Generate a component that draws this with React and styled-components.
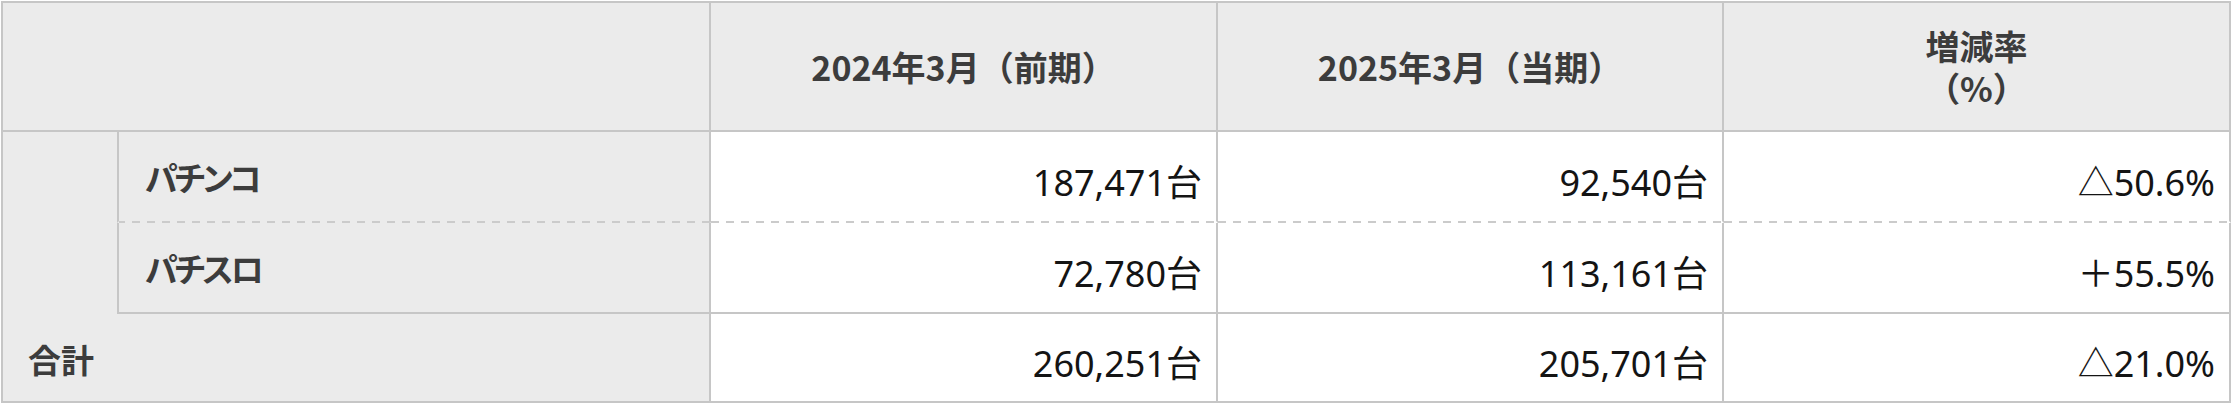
import React from 'react'
import styled, { createGlobalStyle } from 'styled-components'

const line = '#c6c6c6'

const GlobalStyle = createGlobalStyle`
  body {
    margin: 0;
    background: #fff;
  }
`

const Table = styled.div`
  display: grid;
  grid-template-columns: 114px 594px 507px 506px 507px;
  grid-template-rows: 129px 91px 91px 89px;
  width: max-content;
  margin: 1px;
  border-top: 2px solid ${line};
  border-left: 2px solid ${line};
  font-family: "Noto Sans CJK JP", sans-serif;
`

const Cell = styled.div`
  box-sizing: border-box;
  display: flex;
  align-items: center;
  border-right: 2px solid ${line};
  border-bottom: 2px solid ${props => (props.$dashed ? 'transparent' : line)};
  background-color: ${props => (props.$shade ? '#ebebeb' : '#fff')};
  ${props =>
    props.$dashed &&
    `
    background-image: repeating-linear-gradient(to right, #cbcbcb 0 8px, transparent 8px 15px);
    background-size: 100% 2px;
    background-position: left bottom;
    background-repeat: no-repeat;
    background-origin: border-box;
    background-clip: border-box;
  `}
`

const HeadCell = styled(Cell)`
  grid-column: ${props => props.$span || 'auto'};
  flex-direction: column;
  justify-content: center;
  text-align: center;
  color: #3c3c3c;
  font-weight: 700;
  font-size: 34px;
  line-height: 42px;
`

const HeadLine = styled.span`
  display: block;
  height: 42px;
  overflow: visible;
`

const TotalCell = styled(Cell)`
  grid-column: 1 / 3;
  grid-row: 2 / 5;
  align-items: flex-end;
  padding: 0 0 17px 25px;
  color: #3c3c3c;
  font-weight: 700;
  font-size: 33px;
  line-height: 50px;
`

const SubLabel = styled(Cell)`
  grid-column: 2;
  grid-row: ${props => props.$row};
  border-left: 2px solid ${line};
  padding-left: 26px;
  color: #3c3c3c;
  font-weight: 700;
  font-size: 33px;
  letter-spacing: -3px;
  font-feature-settings: "palt";
`

const NumCell = styled(Cell)`
  grid-row: ${props => props.$row};
  justify-content: flex-end;
  padding: 8px 14px 0 0;
  color: #141414;
  font-family: "Noto Sans", "Noto Sans CJK JP", sans-serif;
  font-size: 36px;
`

const rows = [
  { label: 'パチンコ', prev: '187,471台', cur: '92,540台', rate: '△50.6%', dashed: true },
  { label: 'パチスロ', prev: '72,780台', cur: '113,161台', rate: '＋55.5%' },
  { label: '合計', prev: '260,251台', cur: '205,701台', rate: '△21.0%', total: true },
]

const App = () => (
  <>
    <GlobalStyle />
    <Table>
      <HeadCell $shade $span="1 / 3" />
      <HeadCell $shade>2024年3月（前期）</HeadCell>
      <HeadCell $shade>2025年3月（当期）</HeadCell>
      <HeadCell $shade>
        <HeadLine>増減率</HeadLine>
        <HeadLine>（%）</HeadLine>
      </HeadCell>

      <TotalCell $shade>合計</TotalCell>
      {rows.map((r, i) => (
        <React.Fragment key={r.label}>
          {!r.total && (
            <SubLabel $shade $row={i + 2} $dashed={r.dashed}>
              {r.label}
            </SubLabel>
          )}
          <NumCell $row={i + 2} $dashed={r.dashed}>{r.prev}</NumCell>
          <NumCell $row={i + 2} $dashed={r.dashed}>{r.cur}</NumCell>
          <NumCell $row={i + 2} $dashed={r.dashed}>{r.rate}</NumCell>
        </React.Fragment>
      ))}
    </Table>
  </>
)

export default App
